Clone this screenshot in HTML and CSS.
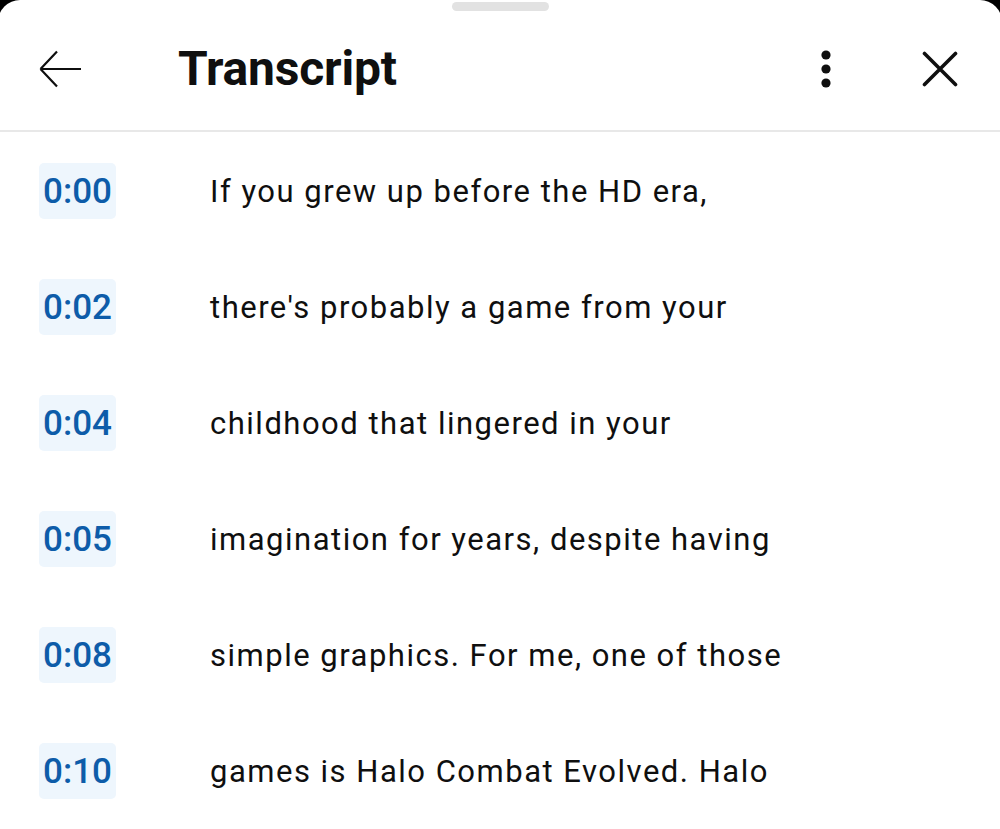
FILE: index.html
```html
<!DOCTYPE html>
<html lang="en">
<head>
<meta charset="utf-8">
<title>Transcript</title>
<link rel="stylesheet" href="styles.css">
</head>
<body>
<div class="sheet">
  <div class="handle"></div>
  <header class="header">
    <button class="icon-btn back" aria-label="Back">
      <svg width="44" height="38" viewBox="0 0 44 38"><path d="M43 19H2.5M2.5 19L19 1.5M2.5 19L19 36.5" fill="none" stroke="#0f0f0f" stroke-width="2.2"/></svg>
    </button>
    <h1 class="title">Transcript</h1>
    <button class="icon-btn more" aria-label="More">
      <svg width="12" height="40" viewBox="0 0 12 40"><circle cx="6" cy="6" r="4.6" fill="#0f0f0f"/><circle cx="6" cy="20" r="4.6" fill="#0f0f0f"/><circle cx="6" cy="34" r="4.6" fill="#0f0f0f"/></svg>
    </button>
    <button class="icon-btn close" aria-label="Close">
      <svg width="36" height="36" viewBox="0 0 36 36"><path d="M2.5 2.5L33.5 33.5M33.5 2.5L2.5 33.5" fill="none" stroke="#0f0f0f" stroke-width="3.6" stroke-linecap="round"/></svg>
    </button>
  </header>
  <ul class="list">
    <li class="row"><span class="chip">0:00</span><span class="text">If you grew up before the HD era,</span></li>
    <li class="row"><span class="chip">0:02</span><span class="text">there's probably a game from your</span></li>
    <li class="row"><span class="chip">0:04</span><span class="text">childhood that lingered in your</span></li>
    <li class="row"><span class="chip">0:05</span><span class="text">imagination for years, despite having</span></li>
    <li class="row"><span class="chip">0:08</span><span class="text">simple graphics. For me, one of those</span></li>
    <li class="row"><span class="chip">0:10</span><span class="text">games is Halo Combat Evolved. Halo</span></li>
  </ul>
</div>
</body>
</html>
```

FILE: styles.css
```css
html, body {
  margin: 0;
  padding: 0;
  background: #000;
  height: 100%;
  overflow: hidden;
}
.sheet {
  margin: 0 -2px;
  padding: 0 2px;
  background: #fff;
  border-radius: 22px 22px 0 0;
  height: 829px;
  overflow: hidden;
  font-family: Roboto, "Liberation Sans", sans-serif;
  color: #0f0f0f;
}
.handle {
  width: 97px;
  height: 9px;
  margin: 2px auto 0;
  background: #e2e2e2;
  border-radius: 5px;
}
.header {
  height: 121px;
  display: flex;
  align-items: center;
  border-bottom: 2px solid #e8e8e8;
  box-sizing: border-box;
}
.icon-btn {
  border: 0;
  background: none;
  padding: 0;
  display: flex;
  align-items: center;
  justify-content: center;
}
.back {
  margin-left: 38px;
  margin-top: -3px;
}
.title {
  margin: -4px 0 0 96px;
  font-size: 48px;
  font-weight: 700;
  letter-spacing: -0.2px;
  flex: 1;
  line-height: 1;
}
.more {
  margin-right: 90px;
  margin-top: -3px;
}
.close {
  margin-right: 42px;
  margin-top: -3px;
}
.list {
  list-style: none;
  margin: 0;
  padding: 1px 0 0;
}
.row {
  height: 116px;
  display: flex;
  align-items: center;
  padding-left: 39px;
}
.chip {
  width: 77px;
  height: 56px;
  box-sizing: border-box;
  display: flex;
  align-items: center;
  justify-content: center;
  background: #eef6fd;
  border-radius: 5px;
  color: #0d5ca9;
  font-size: 35px;
  font-weight: 500;
}
.text {
  margin-left: 94px;
  font-size: 31px;
  letter-spacing: 1.5px;
  font-weight: 400;
  color: #0f0f0f;
}
```
